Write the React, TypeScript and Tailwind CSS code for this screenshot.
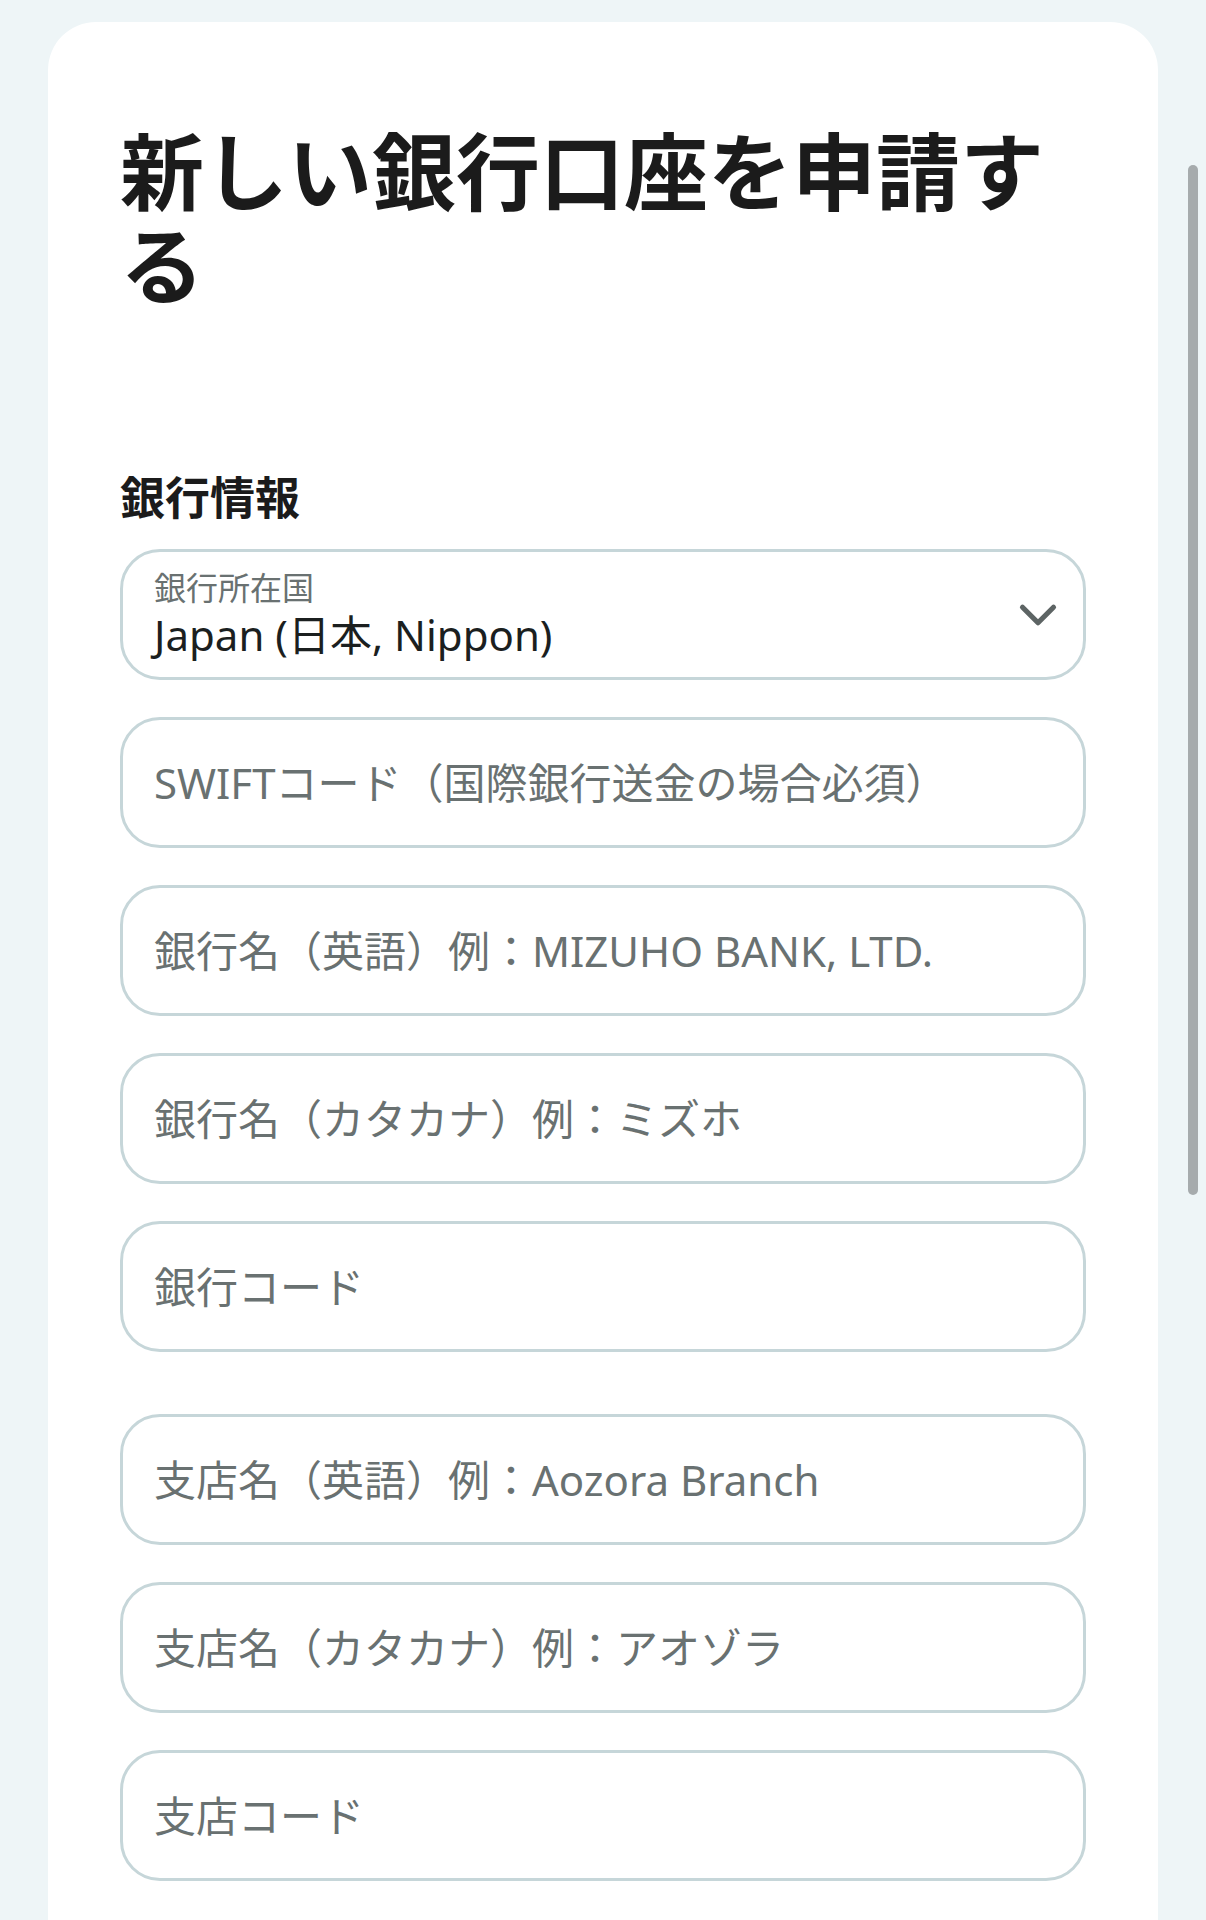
import React from 'react';
import { ChevronDown } from 'lucide-react';

const fields = [
  'SWIFTコード（国際銀行送金の場合必須）',
  '銀行名（英語）例：MIZUHO BANK, LTD.',
  '銀行名（カタカナ）例：ミズホ',
  '銀行コード',
];

const branchFields = [
  '支店名（英語）例：Aozora Branch',
  '支店名（カタカナ）例：アオゾラ',
  '支店コード',
];

function TextField({ placeholder }: { placeholder: string }) {
  return (
    <div className="h-[131px] rounded-[40px] border-[3px] border-[#c6d6d9] bg-white flex items-center px-[31px]">
      <input
        className="w-full bg-transparent outline-none text-[42px] text-[#1b1f1f] placeholder:text-[#697171]"
        placeholder={placeholder}
      />
    </div>
  );
}

export default function App() {
  return (
    <div
      className="relative min-h-[1920px] bg-[#eef5f7] pt-[22px] px-[48px] overflow-hidden"
      style={{ fontFamily: '"Noto Sans", "Noto Sans CJK JP", sans-serif' }}
    >
      <div className="bg-white rounded-t-[48px] min-h-[1898px] px-[72px] pt-[103px]">
        <h1 className="text-[84px] leading-[94px] font-bold text-[#1b1b1b]">
          新しい銀行口座を申請する
        </h1>

        <h2 className="mt-[156px] text-[45px] leading-[58px] font-bold text-[#1b1b1b]">
          銀行情報
        </h2>

        <div className="mt-[22px] flex flex-col gap-[37px]">
          <div className="h-[131px] rounded-[40px] border-[3px] border-[#c6d6d9] bg-white flex items-center justify-between pl-[31px] pr-[14px]">
            <div className="flex flex-col">
              <span className="text-[32px] leading-[40px] text-[#697171]">銀行所在国</span>
              <span className="text-[42px] leading-[54px] text-[#1b1f1f]">Japan (日本, Nippon)</span>
            </div>
            <ChevronDown className="w-[62px] h-[62px] text-[#5d6464]" strokeWidth={2} />
          </div>

          {fields.map((f) => (
            <TextField key={f} placeholder={f} />
          ))}
        </div>

        <div className="mt-[62px] flex flex-col gap-[37px]">
          {branchFields.map((f) => (
            <TextField key={f} placeholder={f} />
          ))}
        </div>
      </div>

      {/* scrollbar overlay */}
      <div className="absolute right-[8px] top-[165px] w-[10px] h-[1030px] rounded-full bg-[#a6abad]" />
    </div>
  );
}
